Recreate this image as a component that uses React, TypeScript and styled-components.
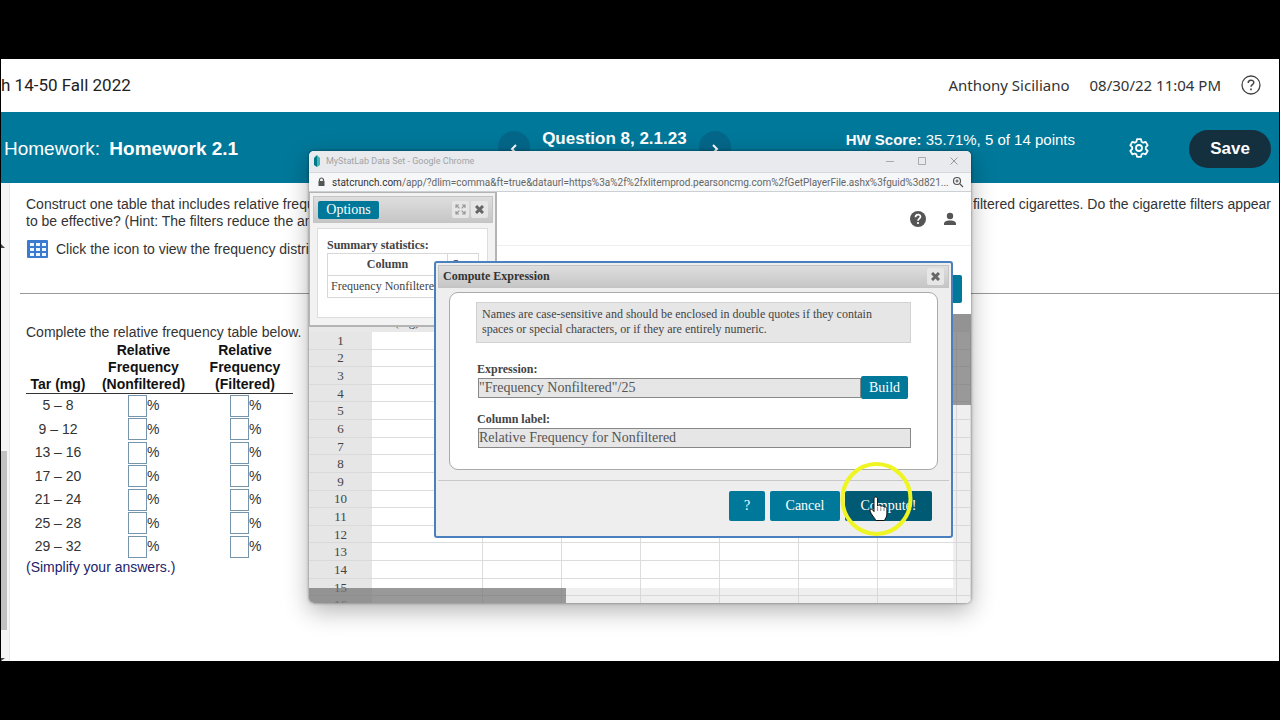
import React from "react";
import styled, { createGlobalStyle, css } from "styled-components";

const teal = "#00789a";
const sans = '"Liberation Sans", Arial, sans-serif';
const serif = '"Liberation Serif", "Times New Roman", serif';

const GlobalStyle = createGlobalStyle`
  * { box-sizing: border-box; }
  body { margin: 0; background: #000; font-family: ${sans}; font-size: 14px; color: #333; }
  button, input { font: inherit; margin: 0; padding: 0; border: 0; border-radius: 0; }
  p { margin: 0; }
  svg { flex: none; }
`;

const Stage = styled.div`
  min-height: 100vh;
  display: flex;
  flex-direction: column;
  padding: 59px 1px;
`;

const Page = styled.div`
  position: relative;
  flex: 1;
  display: flex;
  flex-direction: column;
  overflow: hidden;
  background: #fff;
`;

const CourseBar = styled.header`
  display: flex;
  align-items: center;
  gap: 20px;
  height: 53px;
  padding: 0 18px 2px 0;
  white-space: nowrap;
`;

const CourseName = styled.span`
  flex: 1;
  font-family: Roboto, sans-serif;
  font-size: 17px;
  color: #222;
`;

const UserInfo = styled.span`
  font-family: "Noto Sans", sans-serif;
  font-size: 15px;
  color: #333;
`;

const IconButton = styled.button`
  display: flex;
  align-items: center;
  justify-content: center;
  background: none;
  color: inherit;
`;

const HomeworkBar = styled.div`
  display: flex;
  height: 71px;
  padding: 0 8px 0 3px;
  background: ${teal};
  color: #fff;
  white-space: nowrap;
`;

const HomeworkTitle = styled.h1`
  flex: 0 0 39%;
  margin: 0;
  font-size: 19px;
  font-weight: 400;
  line-height: 74px;

  b { margin-left: 4px; }
`;

const QuestionNav = styled.nav`
  display: flex;
  gap: 12px;
  padding-top: 19px;
`;

const QuestionLabel = styled.b`
  font-size: 17px;
  line-height: 16px;
`;

const NavArrow = styled.button`
  display: flex;
  align-items: center;
  justify-content: center;
  width: 32px;
  height: 32px;
  padding-top: 3px;
  border-radius: 50%;
  background: #04678a;
  color: #fff;
`;

const Score = styled.span`
  margin-left: auto;
  padding-top: 19px;
  font-size: 15px;
  line-height: 18px;
`;

const BarActions = styled.div`
  display: flex;
  align-items: center;
  gap: 40px;
  margin-left: 54px;
`;

const SaveButton = styled.button`
  width: 82px;
  height: 38px;
  margin-top: 3px;
  border-radius: 19px;
  background: #14303f;
  color: #fff;
  font-size: 17px;
  font-weight: 700;
`;

const Body = styled.div`
  flex: 1;
  display: flex;
`;

const ScrollRail = styled.div`
  display: flex;
  flex-direction: column;
  width: 8px;
  padding: 61px 2px 0 0;
  background: #f4f4f4;
`;

const ScrollThumb = styled.div`
  height: 179px;
  margin-top: 203px;
  background: #c1c1c1;
`;

const Content = styled.main`
  flex: 1;
  display: flex;
  flex-direction: column;
  padding: 13px 8px 0 10px;
  border-left: 1px solid #e8e8e8;
  line-height: 17px;
`;

const Prompt = styled.div`
  padding-left: 6px;
`;

const SplitLine = styled.p`
  display: flex;
  justify-content: space-between;
  white-space: nowrap;
`;

const DataLink = styled.p`
  display: flex;
  align-items: center;
  gap: 8px;
  padding: 10px 0 0 7px;
`;

const Rule = styled.hr`
  width: calc(100% + 8px);
  margin: 35px 0 30px;
  border: 0;
  border-top: 1px solid #999;
`;

const FrequencyTable = styled.table`
  width: 267px;
  margin-top: 1px;
  border-collapse: collapse;
  text-align: center;
  table-layout: fixed;

  col:nth-child(1) { width: 64px; }
  col:nth-child(2) { width: 107px; }
  th {
    padding: 0;
    vertical-align: bottom;
    border-bottom: 1px solid #333;
    color: #111;
    white-space: nowrap;
  }
  tbody { height: 165px; }
  td { padding: 0; }
`;

const PercentField = styled.label`
  display: flex;
  align-items: center;
  padding-left: ${(p: { $pad?: number }) => p.$pad ?? 38}px;
`;

const PercentInput = styled.input`
  width: 19px;
  height: 22px;
  border: 1px solid #7595ad;
  background: #fff;
`;

const AnswerNote = styled.p`
  color: #22226a;
`;

const BrowserWindow = styled.section`
  position: absolute;
  left: 308px;
  top: 92px;
  width: 662px;
  height: 452px;
  display: flex;
  flex-direction: column;
  overflow: hidden;
  border-radius: 5px;
  background: #fff;
  font-family: ${serif};
`;

const WindowShadow = styled.div`
  position: absolute;
  left: 308px;
  top: 92px;
  width: 662px;
  height: 452px;
  border-radius: 5px;
  box-shadow: 0 8px 24px rgba(0, 0, 0, 0.3), 0 0 3px rgba(0, 0, 0, 0.5);
`;

const TitleBar = styled.div`
  display: flex;
  align-items: center;
  gap: 6px;
  height: 22px;
  padding: 0 11px 2px 5px;
  border-bottom: 1px solid #d4d8da;
  background: #e8eaed;
  color: #a0a4a8;
  font-family: Roboto, sans-serif;
  font-size: 9px;

  span { flex: 1; }
`;

const WindowButtons = styled.div`
  display: flex;
  gap: 20px;
`;

const AddressBar = styled.div`
  display: flex;
  align-items: center;
  gap: 6px;
  height: 19px;
  padding: 0 7px 0 8px;
  border-bottom: 1px solid #ccd0d2;
  background: #f5f7f8;
  color: #666;
  font-family: Roboto, sans-serif;
  font-size: 10px;

  span { flex: 1; min-width: 0; white-space: nowrap; }
  b { font-weight: 400; color: #333; }
`;

const AppBar = styled.div`
  display: flex;
  align-items: center;
  justify-content: flex-end;
  gap: 16px;
  height: 54px;
  padding: 0 14px;
  border-bottom: 1px solid #eee;
  color: #555;
`;

const Toolbar = styled.div`
  display: flex;
  align-items: center;
  justify-content: flex-end;
  height: 68px;
  padding: 28px 9px 10px;
`;

const TealButton = styled.button<{ $w: number; $h: number; $dark?: boolean }>`
  width: ${(p) => p.$w}px;
  height: ${(p) => p.$h}px;
  flex: none;
  border-radius: 2px;
  background: ${(p) => (p.$dark ? "#005a73" : teal)};
  color: #fff;
  font-size: 14px;
`;

const SheetArea = styled.div`
  position: relative;
  flex: 1;
  overflow: hidden;
`;

const Sheet = styled.table`
  width: 100%;
  height: 300px;
  border-collapse: collapse;
  table-layout: fixed;
  font-size: 13px;
  line-height: 15px;
  color: #444;

  th, td { padding: 0; font-weight: 400; text-align: center; }
  thead th { height: 18px; padding: 0 0 3px 2px; background: #e8e8e8; text-align: left; }
  tbody th { background: #e6e6e6; border-bottom: 1px solid #dadada; }
  tbody td { border-bottom: 1px solid #dcdcdc; border-right: 1px solid #dcdcdc; }
  col { width: 79px; }
  col:nth-child(1) { width: 63px; }
  col:nth-child(2) { width: 110px; }
  col:last-child { width: auto; }
`;

const scrollPiece = css`
  position: absolute;
  background: rgba(210, 210, 210, 0.35);
`;

const HorizontalScroll = styled.div`
  ${scrollPiece}
  left: 0;
  right: 0;
  bottom: 0;
  height: 15px;

  &::before {
    content: "";
    display: block;
    width: 257px;
    height: 100%;
    background: rgba(100, 100, 100, 0.62);
  }
`;

const VerticalScroll = styled.div`
  ${scrollPiece}
  right: 0;
  top: 0;
  bottom: 15px;
  width: 18px;

  &::before {
    content: "";
    display: block;
    height: 91px;
    background: rgba(100, 100, 100, 0.62);
  }
`;

const OptionsDialog = styled.div`
  position: absolute;
  left: 0;
  top: 41px;
  width: 188px;
  height: 135px;
  display: flex;
  flex-direction: column;
  gap: 5px;
  padding: 3px 2px 7px 3px;
  border: 1px solid #b4b4b4;
  border-width: 1px 2px 2px 1px;
  background: #f2f2f2;
`;

const DialogHeader = styled.div`
  display: flex;
  align-items: center;
  gap: 2px;
  height: 27px;
  padding: 0 4px;
  border: 1px solid #c4c4c4;
  background: linear-gradient(#dedede, #c6c6c6);
`;

const DialogTitle = styled.h2`
  flex: 1;
  margin: 0;
  font-size: 12px;
  color: #333;
`;

const Spacer = styled.span`
  flex: 1;
`;

const SmallButton = styled.button`
  display: flex;
  align-items: center;
  justify-content: center;
  width: 17px;
  height: 17px;
  border-radius: 2px;
  background: #e6e6e6;
  color: #666;
`;

const Results = styled.div`
  flex: 1;
  margin: 0 5px 0 4px;
  padding: 9px 9px 0;
  border: 1px solid #ddd;
  background: #fff;
  overflow: hidden;
`;

const ResultsTable = styled.table`
  width: 152px;
  border-collapse: collapse;
  table-layout: fixed;
  font-size: 12px;
  color: #444;

  caption { font-weight: 700; text-align: left; line-height: 15px; white-space: nowrap; }
  col:first-child { width: 120px; }
  th, td { height: 22px; padding: 0 3px; border: 1px solid #d8d8d8; white-space: nowrap; }
  th:last-child { padding-right: 18px; }
  a { color: #33406e; text-decoration: none; }
`;

const ComputeDialog = styled.form`
  position: absolute;
  left: 125px;
  top: 110px;
  width: 519px;
  height: 277px;
  display: flex;
  flex-direction: column;
  padding: 2px;
  border: 2px solid #4b80bf;
  border-radius: 3px;
  background: #eee;
  color: #444;
`;

const ComputeHeader = styled(DialogHeader)`
  height: 23px;
`;

const ComputePanel = styled.div`
  margin: 4px 11px 0;
  height: 178px;
  padding: 9px 26px 0;
  border: 1px solid #aaa;
  border-radius: 9px;
  background: #fff;
`;

const Hint = styled.p`
  height: 41px;
  margin-bottom: 19px;
  padding: 4px 5px;
  border: 1px solid #d2d2d2;
  background: #e6e6e6;
  font-size: 12px;
  line-height: 15px;
  white-space: nowrap;
`;

const FieldLabel = styled.label`
  display: block;
  padding-left: 1px;
  font-size: 12px;
  font-weight: 700;
  line-height: 14px;
`;

const FieldRow = styled.div<{ $inset?: number }>`
  display: flex;
  align-items: center;
  height: 23px;
  margin-bottom: 13px;
  padding: 0 ${(p) => p.$inset ?? 0}px 0 2px;
`;

const TextField = styled.input`
  flex: 1;
  min-width: 0;
  height: 20px;
  border: 1px solid #888;
  background: #e6e6e6;
  color: #555;
  font-size: 14px;
`;

const DialogActions = styled.div`
  display: flex;
  justify-content: flex-end;
  gap: 5px;
  margin-top: 10px;
  padding: 10px 17px 0;
  border-top: 1px solid #c8c8c8;
`;

const Pointer = styled.svg`
  position: absolute;
  left: 838px;
  top: 402px;
  pointer-events: none;
`;

const ranges = ["5 – 8", "9 – 12", "13 – 16", "17 – 20", "21 – 24", "25 – 28", "29 – 32"];
const sheetRows = Array.from({ length: 16 }, (_, i) => i + 1);
const sheetCols = [0, 1, 2, 3, 4, 5, 6, 7];

const CloseIcon = () => (
  <svg width="9" height="9" viewBox="0 0 9 9" stroke="currentColor" strokeWidth="3">
    <path d="M1 1l7 7M8 1L1 8" />
  </svg>
);

const ExpandIcon = () => (
  <svg width="11" height="11" viewBox="0 0 11 11" fill="none" stroke="#999" strokeWidth="1.2">
    <path d="M1 4V1h3M7 1h3v3M10 7v3H7M4 10H1V7M1 1l3.4 3.4M10 1L6.6 4.4M10 10L6.6 6.6M1 10l3.4-3.4" />
  </svg>
);

const Chevron = ({ flip }: { flip?: boolean }) => (
  <svg width="10" height="10" viewBox="0 0 10 10" fill="none" stroke="currentColor" strokeWidth="2">
    <path d={flip ? "M3 1l4 4-4 4" : "M7 1L3 5l4 4"} />
  </svg>
);

const GearIcon = () => (
  <svg width="20" height="20" viewBox="0 0 20 20" fill="none" stroke="currentColor" strokeWidth="1.8" strokeLinejoin="round">
    <path d="M8 1.2h4l.6 2.6 1.6.9 2.5-.8 2 3.5-1.9 1.8v1.800l1.9 1.8-2 3.5-2.5-.8-1.6.9-.6 2.5H8l-.6-2.500-1.600-.9-2.500.8-2-3.500 1.900-1.800V9.200L1.300 7.400l2-3.500 2.500.8 1.600-.9z" />
    <circle cx="10" cy="10" r="3" />
  </svg>
);

export default function App() {
  return (
    <Stage>
      <GlobalStyle />
      <Page>
        <CourseBar>
          <CourseName>h 14-50 Fall 2022</CourseName>
          <UserInfo>Anthony Siciliano</UserInfo>
          <UserInfo>08/30/22 11:04 PM</UserInfo>
          <IconButton aria-label="Help">
            <svg width="20" height="20" viewBox="0 0 20 20" fill="none" stroke="#444" strokeWidth="1.3">
              <circle cx="10" cy="10" r="9" />
              <path d="M7.2 8c0-3.7 5.6-3.7 5.6-.4 0 2-2.8 2-2.8 4.2" strokeWidth="1.5" />
              <path d="M10 13.6v1.7" strokeWidth="1.7" />
            </svg>
          </IconButton>
        </CourseBar>

        <HomeworkBar>
          <HomeworkTitle>
            Homework: <b>Homework 2.1</b>
          </HomeworkTitle>
          <QuestionNav>
            <NavArrow aria-label="Previous question"><Chevron /></NavArrow>
            <QuestionLabel>Question 8, 2.1.23</QuestionLabel>
            <NavArrow aria-label="Next question"><Chevron flip /></NavArrow>
          </QuestionNav>
          <Score><b>HW Score:</b> 35.71%, 5 of 14 points</Score>
          <BarActions>
            <IconButton aria-label="Settings"><GearIcon /></IconButton>
            <SaveButton>Save</SaveButton>
          </BarActions>
        </HomeworkBar>

        <Body>
          <ScrollRail>
            <svg width="4" height="4" viewBox="0 0 4 4"><path d="M0 0l4 4H0z" fill="#444" /></svg>
            <ScrollThumb />
            <Spacer />
            <svg width="4" height="4" viewBox="0 0 4 4"><path d="M0 4V1h4z" fill="#444" /></svg>
          </ScrollRail>
          <Content>
            <Prompt>
              <SplitLine>
                <span>Construct one table that includes relative frequencies</span>
                <span>filtered cigarettes. Do the cigarette filters appear</span>
              </SplitLine>
              <p>to be effective? (Hint: The filters reduce the amount</p>
            </Prompt>
            <DataLink>
              <svg width="21" height="18" viewBox="0 0 21 18">
                <rect width="21" height="18" rx="1" fill="#3a7bd0" />
                <path d="M3 3h4v3H3zM9 3h4v3H9zM15 3h4v3h-4zM3 8h4v3H3zM9 8h4v3H9zM15 8h4v3h-4zM3 13h4v3H3zM9 13h4v3H9zM15 13h4v3h-4z" fill="#eef6ff" />
              </svg>
              Click the icon to view the frequency distribution
            </DataLink>
            <Rule />
            <Prompt>
              <p>Complete the relative frequency table below.</p>
              <FrequencyTable>
                <colgroup><col /><col /><col /></colgroup>
                <thead>
                  <tr>
                    <th>Tar (mg)</th>
                    <th>Relative<br />Frequency<br />(Nonfiltered)</th>
                    <th>Relative<br />Frequency<br />(Filtered)</th>
                  </tr>
                </thead>
                <tbody>
                  {ranges.map((r) => (
                    <tr key={r}>
                      <td>{r}</td>
                      <td><PercentField><PercentInput aria-label={`Nonfiltered ${r}`} />%</PercentField></td>
                      <td><PercentField $pad={33}><PercentInput aria-label={`Filtered ${r}`} />%</PercentField></td>
                    </tr>
                  ))}
                </tbody>
              </FrequencyTable>
              <AnswerNote>(Simplify your answers.)</AnswerNote>
            </Prompt>
          </Content>
        </Body>

        <WindowShadow />
        <BrowserWindow>
          <TitleBar>
            <svg width="6" height="12" viewBox="0 0 6 12">
              <path d="M0 3l3-3v12L0 10z" fill="#007a8a" />
              <path d="M3 0l3 3v7l-3 2z" fill="#46b4b4" />
            </svg>
            <span>MyStatLab Data Set - Google Chrome</span>
            <WindowButtons>
              <IconButton aria-label="Minimize"><svg width="12" height="10" stroke="#aaa"><path d="M2 5.5h8" /></svg></IconButton>
              <IconButton aria-label="Maximize"><svg width="12" height="10" fill="none" stroke="#aaa"><path d="M2.5 1.5h7v7h-7z" /></svg></IconButton>
              <IconButton aria-label="Close"><svg width="12" height="10" stroke="#999"><path d="M2.5 1.5l7 7M9.5 1.5l-7 7" /></svg></IconButton>
            </WindowButtons>
          </TitleBar>
          <AddressBar>
            <svg width="9" height="10" viewBox="0 0 9 10">
              <path d="M2.5 4V3a2 2 0 0 1 4 0v1" fill="none" stroke="#555" strokeWidth="1.2" />
              <rect x="1.5" y="4" width="6" height="5" fill="#555" />
            </svg>
            <span><b>statcrunch.com</b>/app/?dlim=comma&amp;ft=true&amp;dataurl=https%3a%2f%2fxlitemprod.pearsoncmg.com%2fGetPlayerFile.ashx%3fguid%3d821...</span>
            <IconButton aria-label="Zoom">
              <svg width="12" height="12" viewBox="0 0 12 12" fill="none" stroke="#555" strokeWidth="1.2">
                <circle cx="5" cy="5" r="3.5" />
                <path d="M8 8l3 3M3.5 5h3M5 3.5v3" />
              </svg>
            </IconButton>
          </AddressBar>
          <AppBar>
            <IconButton aria-label="Help">
              <svg width="18" height="18" viewBox="0 0 18 18">
                <circle cx="9" cy="9" r="8" fill="#555" />
                <path d="M6.5 7.2c0-3.4 5-3.4 5-.4C11.5 8.6 9 8.7 9 10.7M9 12v2" fill="none" stroke="#fff" strokeWidth="1.7" />
              </svg>
            </IconButton>
            <IconButton aria-label="Account">
              <svg width="14" height="14" viewBox="0 0 14 14" fill="#555">
                <circle cx="7" cy="4" r="3.2" />
                <path d="M1 13v-1.500C1 9 5 8.500 7 8.500s6 .5 6 3V13z" />
              </svg>
            </IconButton>
          </AppBar>
          <Toolbar><TealButton $w={60} $h={28} aria-label="Open" /></Toolbar>
          <SheetArea>
            <Sheet>
              <colgroup><col />{sheetCols.map((c) => <col key={c} />)}</colgroup>
              <thead><tr><th />{sheetCols.map((c) => <th key={c}>{c === 0 ? "Tar (mg)" : ""}</th>)}</tr></thead>
              <tbody>
                {sheetRows.map((n) => (
                  <tr key={n}><th>{n}</th>{sheetCols.map((c) => <td key={c} />)}</tr>
                ))}
              </tbody>
            </Sheet>
            <VerticalScroll />
            <HorizontalScroll />
          </SheetArea>

          <OptionsDialog>
            <DialogHeader>
              <TealButton $w={61} $h={18}>Options</TealButton>
              <Spacer />
              <SmallButton aria-label="Expand"><ExpandIcon /></SmallButton>
              <SmallButton aria-label="Close"><CloseIcon /></SmallButton>
            </DialogHeader>
            <Results>
              <ResultsTable>
                <caption>Summary statistics:</caption>
                <colgroup><col /><col /></colgroup>
                <tbody>
                  <tr><th>Column</th><th><a href="#s">S</a></th></tr>
                  <tr><td>Frequency Nonfiltered</td><td /></tr>
                </tbody>
              </ResultsTable>
            </Results>
          </OptionsDialog>

          <ComputeDialog onSubmit={(e) => e.preventDefault()}>
            <ComputeHeader>
              <DialogTitle>Compute Expression</DialogTitle>
              <SmallButton type="button" aria-label="Close"><CloseIcon /></SmallButton>
            </ComputeHeader>
            <ComputePanel>
              <Hint>
                Names are case-sensitive and should be enclosed in double quotes if they contain
                <br />
                spaces or special characters, or if they are entirely numeric.
              </Hint>
              <FieldLabel htmlFor="expression">Expression:</FieldLabel>
              <FieldRow $inset={3}>
                <TextField id="expression" defaultValue={'"Frequency Nonfiltered"/25'} />
                <TealButton type="button" $w={47} $h={23}>Build</TealButton>
              </FieldRow>
              <FieldLabel htmlFor="column-label">Column label:</FieldLabel>
              <FieldRow>
                <TextField id="column-label" defaultValue="Relative Frequency for Nonfiltered" />
              </FieldRow>
            </ComputePanel>
            <DialogActions>
              <TealButton type="button" $w={36} $h={30}>?</TealButton>
              <TealButton type="button" $w={70} $h={30}>Cancel</TealButton>
              <TealButton type="submit" $w={87} $h={30} $dark>Compute!</TealButton>
            </DialogActions>
          </ComputeDialog>
        </BrowserWindow>

        <Pointer width="74" height="76" viewBox="0 0 74 76">
          <ellipse cx="37.5" cy="38" rx="34" ry="35" fill="none" stroke="#eef522" strokeWidth="4" />
          <path d="M35 38c0-2.600 3.600-2.600 3.600 0v7c1-1.400 3-1 3.200.4 1.200-1 3-.4 3.200.8 1.300-.8 2.900 0 2.900 1.600v5.200c0 3-1.800 4.500-2.400 6.500h-8.800c-.8-2.800-4.400-5.400-5.700-9.500-.6-2 1.800-2.600 2.900-.9l1.100 1.500z" fill="#fff" stroke="#111" strokeWidth="1" />
          <path d="M38.600 46v4M41.800 46.500V50M45 47v3" stroke="#111" strokeWidth=".5" />
        </Pointer>
      </Page>
    </Stage>
  );
}
